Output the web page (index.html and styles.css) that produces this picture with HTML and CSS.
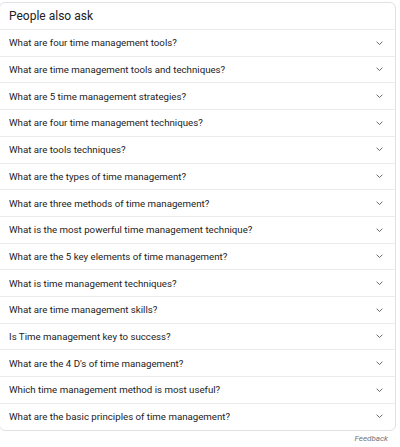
FILE: index.html
```html
<!DOCTYPE html>
<html>
<head>
<meta charset="utf-8">
<link rel="stylesheet" href="styles.css">
</head>
<body>
<div class="card">
  <div class="head">People also ask</div>
  <div class="row"><span>What are four time management tools?</span><svg class="chev" viewBox="0 0 8 5"><polyline points="0.7,0.7 4,4 7.3,0.7"/></svg></div>
  <div class="row"><span>What are time management tools and techniques?</span><svg class="chev" viewBox="0 0 8 5"><polyline points="0.7,0.7 4,4 7.3,0.7"/></svg></div>
  <div class="row"><span>What are 5 time management strategies?</span><svg class="chev" viewBox="0 0 8 5"><polyline points="0.7,0.7 4,4 7.3,0.7"/></svg></div>
  <div class="row"><span>What are four time management techniques?</span><svg class="chev" viewBox="0 0 8 5"><polyline points="0.7,0.7 4,4 7.3,0.7"/></svg></div>
  <div class="row"><span>What are tools techniques?</span><svg class="chev" viewBox="0 0 8 5"><polyline points="0.7,0.7 4,4 7.3,0.7"/></svg></div>
  <div class="row"><span>What are the types of time management?</span><svg class="chev" viewBox="0 0 8 5"><polyline points="0.7,0.7 4,4 7.3,0.7"/></svg></div>
  <div class="row"><span>What are three methods of time management?</span><svg class="chev" viewBox="0 0 8 5"><polyline points="0.7,0.7 4,4 7.3,0.7"/></svg></div>
  <div class="row"><span>What is the most powerful time management technique?</span><svg class="chev" viewBox="0 0 8 5"><polyline points="0.7,0.7 4,4 7.3,0.7"/></svg></div>
  <div class="row"><span>What are the 5 key elements of time management?</span><svg class="chev" viewBox="0 0 8 5"><polyline points="0.7,0.7 4,4 7.3,0.7"/></svg></div>
  <div class="row"><span>What is time management techniques?</span><svg class="chev" viewBox="0 0 8 5"><polyline points="0.7,0.7 4,4 7.3,0.7"/></svg></div>
  <div class="row"><span>What are time management skills?</span><svg class="chev" viewBox="0 0 8 5"><polyline points="0.7,0.7 4,4 7.3,0.7"/></svg></div>
  <div class="row"><span>Is Time management key to success?</span><svg class="chev" viewBox="0 0 8 5"><polyline points="0.7,0.7 4,4 7.3,0.7"/></svg></div>
  <div class="row"><span>What are the 4 D's of time management?</span><svg class="chev" viewBox="0 0 8 5"><polyline points="0.7,0.7 4,4 7.3,0.7"/></svg></div>
  <div class="row"><span>Which time management method is most useful?</span><svg class="chev" viewBox="0 0 8 5"><polyline points="0.7,0.7 4,4 7.3,0.7"/></svg></div>
  <div class="row"><span>What are the basic principles of time management?</span><svg class="chev" viewBox="0 0 8 5"><polyline points="0.7,0.7 4,4 7.3,0.7"/></svg></div>
</div>
<div class="feedback">Feedback</div>
</body>
</html>
```
FILE: styles.css
```css
html, body {
  margin: 0;
  padding: 0;
  background: #ffffff;
}
body {
  font-family: Roboto, "Liberation Sans", Arial, sans-serif;
  color: #202124;
}
.card {
  margin: 2px 0 0 -1px;
  width: 395px;
  border: 1px solid #dfe1e5;
  border-radius: 6px;
  overflow: hidden;
}
.head {
  height: 26px;
  display: flex;
  align-items: center;
  padding-left: 9px;
  font-size: 12px;
  color: #202124;
}
.row {
  height: 25.71px;
  border-top: 1px solid #ebebeb;
  display: flex;
  align-items: center;
  justify-content: space-between;
  padding: 0 13px 0 9px;
  font-size: 9.7px;
  color: #222222;
}
.chev {
  width: 7px;
  height: 4.5px;
  margin-right: -1px;
  fill: none;
  stroke: #5f6368;
  stroke-width: 1.1;
}
.feedback {
  text-align: right;
  padding-right: 12px;
  margin-top: 3px;
  font-size: 8px;
  font-style: italic;
  color: #70757a;
}
```
